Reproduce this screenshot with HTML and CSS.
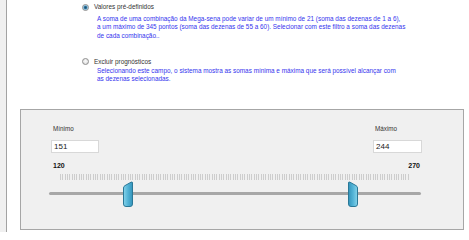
FILE: index.html
```html
<!DOCTYPE html>
<html lang="pt">
<head>
<meta charset="utf-8">
<link rel="stylesheet" href="styles.css">
</head>
<body>
<div class="frame">
  <div class="side"></div>
  <div class="main">
    <div class="opt opt1"><span class="radio checked"></span><span class="opt-label">Valores pré-definidos</span></div>
    <div class="desc desc1">A soma de uma combinação da Mega-sena pode variar de um mínimo de 21 (soma das dezenas de 1 a 6),<br>a um máximo de 345 pontos (soma das dezenas de 55 a 60). Selecionar com este filtro a soma das dezenas<br>de cada combinação..</div>
    <div class="opt opt2"><span class="radio"></span><span class="opt-label">Excluir prognósticos</span></div>
    <div class="desc desc2">Selecionando este campo, o sistema mostra as somas mínima e máxima que será possível alcançar com<br>as dezenas selecionadas.</div>

    <div class="group">
      <div class="fields">
        <div class="field">
          <div class="field-label">Mínimo</div>
          <div class="input in-min">151</div>
        </div>
        <div class="field">
          <div class="field-label">Máximo</div>
          <div class="input in-max">244</div>
        </div>
      </div>
      <div class="scale"><span>120</span><span>270</span></div>
      <div class="slider">
        <div class="ticks"></div>
        <div class="track"></div>
        <svg class="thumb thumb-min" width="10" height="26" viewBox="0 0 10 26">
          <defs>
            <linearGradient id="tg" x1="0" y1="0" x2="1" y2="0">
              <stop offset="0" stop-color="#86d3ea"/>
              <stop offset="0.5" stop-color="#52b3d6"/>
              <stop offset="1" stop-color="#3494bb"/>
            </linearGradient>
          </defs>
          <path d="M0.5 7 L0.5 23 Q0.5 25.5 3 25.5 L7 25.5 Q9.5 25.5 9.5 23 L9.5 2 Q9.5 0.4 8 1.2 L2 4.6 Q0.5 5.4 0.5 7 Z" fill="url(#tg)" stroke="#2a7897" stroke-width="1"/>
        </svg>
        <svg class="thumb thumb-max" width="10" height="26" viewBox="0 0 10 26">
          <g transform="translate(10,0) scale(-1,1)">
            <path d="M0.5 7 L0.5 23 Q0.5 25.5 3 25.5 L7 25.5 Q9.5 25.5 9.5 23 L9.5 2 Q9.5 0.4 8 1.2 L2 4.6 Q0.5 5.4 0.5 7 Z" fill="url(#tg)" stroke="#2a7897" stroke-width="1"/>
          </g>
        </svg>
      </div>
    </div>
  </div>
</div>
</body>
</html>
```
FILE: styles.css
```css
html, body {
  margin: 0;
  padding: 0;
  background: #ffffff;
}
body {
  width: 469px;
  height: 232px;
  overflow: hidden;
  font-family: "Liberation Sans", Arial, sans-serif;
  color: #333;
}
.frame {
  display: flex;
  height: 232px;
}
.side {
  width: 6px;
  background: #f0f0f0;
  border-right: 1px solid #a3a3a3;
  flex: none;
}
.main {
  flex: 1;
  padding-top: 3px;
}
.opt {
  display: flex;
  align-items: center;
  height: 8px;
  margin-left: 75px;
  font-size: 6.4px;
  line-height: 8px;
  white-space: nowrap;
}
.opt2 {
  margin-top: 17.5px;
}
.radio {
  position: relative;
  width: 7px;
  height: 7px;
  box-sizing: border-box;
  border-radius: 50%;
  border: 1px solid #8e8e8e;
  background: radial-gradient(circle at 50% 40%, #fbfbfb 0, #e6e6e6 60%, #cfcfcf 100%);
  margin-right: 5px;
  flex: none;
}
.radio.checked {
  background: radial-gradient(circle at 50% 50%, #1d4f72 0, #2a6d96 1.2px, #9fd0ea 2.2px, #eaf5fb 100%);
}
.opt-label {
  color: #333;
}
.desc {
  margin-left: 90px;
  color: #3535ee;
  font-size: 6.4px;
  line-height: 8.5px;
  white-space: nowrap;
}
.desc1 {
  margin-top: 3.75px;
}
.desc2 {
  margin-top: 1px;
}
.group {
  margin-top: 25.25px;
  margin-left: 13px;
  width: 444px;
  height: 121px;
  box-sizing: border-box;
  border: 1px solid #a6a6a6;
  background: #f0f0f0;
  padding: 15px 41px 0 28px;
}
.fields {
  display: flex;
  justify-content: space-between;
  padding-left: 2px;
}
.field {
  display: flex;
  flex-direction: column;
}
.field-label {
  margin-left: 2px;
  font-size: 6.3px;
  line-height: 8px;
  color: #333;
}
.input {
  margin-top: 7px;
  height: 13px;
  box-sizing: border-box;
  background: #ffffff;
  border: 1px solid #d8d8d8;
  padding-left: 2px;
  font-size: 8px;
  line-height: 11px;
  color: #1a1a1a;
}
.in-min {
  width: 48px;
}
.in-max {
  width: 49px;
}
.scale {
  margin-top: 9px;
  display: flex;
  justify-content: space-between;
  padding: 0 2px 0 4px;
  font-size: 7px;
  font-weight: bold;
  line-height: 8px;
  color: #111;
}
.slider {
  position: relative;
  margin-top: 4px;
}
.ticks {
  margin-left: 11px;
  width: 350px;
  height: 6px;
  background: repeating-linear-gradient(90deg, #cdcdcd 0, #cdcdcd 1px, transparent 1px, transparent 2.333px);
}
.track {
  margin-top: 12px;
  width: 372px;
  height: 3px;
  border-radius: 2px;
  background: #a7a7a7;
}
.thumb {
  position: absolute;
  top: 7px;
  display: block;
}
.thumb-min {
  left: 74px;
}
.thumb-max {
  left: 299px;
}
```
